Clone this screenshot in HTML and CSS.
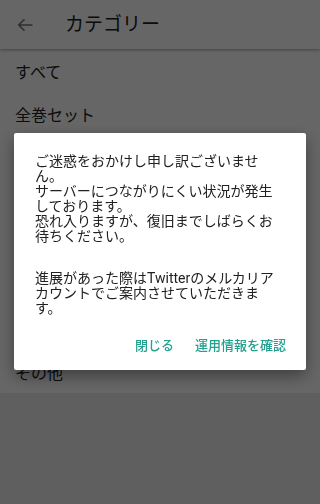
FILE: index.html
```html
<!DOCTYPE html>
<html lang="ja">
<head>
<meta charset="utf-8">
<link rel="stylesheet" href="styles.css">
</head>
<body>
<div class="screen">
  <header class="appbar">
    <svg class="back" width="16" height="14" viewBox="0 0 16 14"><path d="M15.5 7H2M7.5 1.2L1.7 7l5.8 5.8" fill="none" stroke="#767676" stroke-width="1.6"/></svg>
    <h1 class="title">カテゴリー</h1>
  </header>
  <ul class="list">
    <li class="item">すべて</li>
    <li class="item">全巻セット</li>
    <li class="item">少年漫画</li>
    <li class="item">少女漫画</li>
    <li class="item">青年漫画</li>
    <li class="item">女性漫画</li>
    <li class="item">同人誌</li>
    <li class="item">その他</li>
  </ul>
</div>
<div class="scrim">
  <div class="dialog">
    <div class="body">
      <p>ご迷惑をおかけし申し訳ございません。<br>サーバーにつながりにくい状況が発生しております。<br>恐れ入りますが、復旧までしばらくお待ちください。</p>
      <p class="p2">進展があった際はTwitterのメルカリアカウントでご案内させていただきます。</p>
    </div>
    <div class="actions">
      <span class="btn">閉じる</span>
      <span class="btn">運用情報を確認</span>
    </div>
  </div>
</div>
</body>
</html>
```
FILE: styles.css
```css
* { box-sizing: border-box; }
html, body { margin: 0; padding: 0; }
body {
  width: 320px;
  height: 504px;
  overflow: hidden;
  background: #eeeeee;
  font-family: Roboto, "Noto Sans CJK JP", sans-serif;
  color: #212121;
}
.screen { display: flex; flex-direction: column; }
.appbar {
  height: 49px;
  background: #fff;
  display: flex;
  align-items: center;
  padding-left: 17px;
  box-shadow: 0 1px 3px rgba(0,0,0,0.35);
  position: relative;
}
.back { display: block; margin-top: 1px; }
.title {
  margin: 0 0 0 32px;
  font-size: 19px;
  font-weight: 400;
  line-height: 24px;
  color: #202020;
}
.list {
  list-style: none;
  margin: 0;
  padding: 0;
  background: #fff;
}
.item {
  height: 43px;
  display: flex;
  align-items: center;
  padding-left: 15px;
  font-size: 16px;
  color: #202020;
}
.scrim {
  position: fixed;
  inset: 0;
  z-index: 10;
  background: rgba(0,0,0,0.6);
  display: flex;
  flex-direction: column;
  align-items: stretch;
  padding: 133px 14px 0;
}
.dialog {
  background: #fff;
  border-radius: 2px;
  box-shadow: 0 6px 16px rgba(0,0,0,0.4);
  padding: 21px 0 0;
}
.body {
  padding: 0 21px;
  font-size: 14px;
  line-height: 15px;
  color: #212121;
}
.body p { margin: 0; }
.body .p2 { margin-top: 26.5px; }
.actions {
  display: flex;
  justify-content: flex-end;
  gap: 21px;
  padding: 22px 20px 16px;
}
.btn {
  font-size: 13px;
  line-height: 16px;
  font-weight: 500;
  color: #23a08e;
}
```
